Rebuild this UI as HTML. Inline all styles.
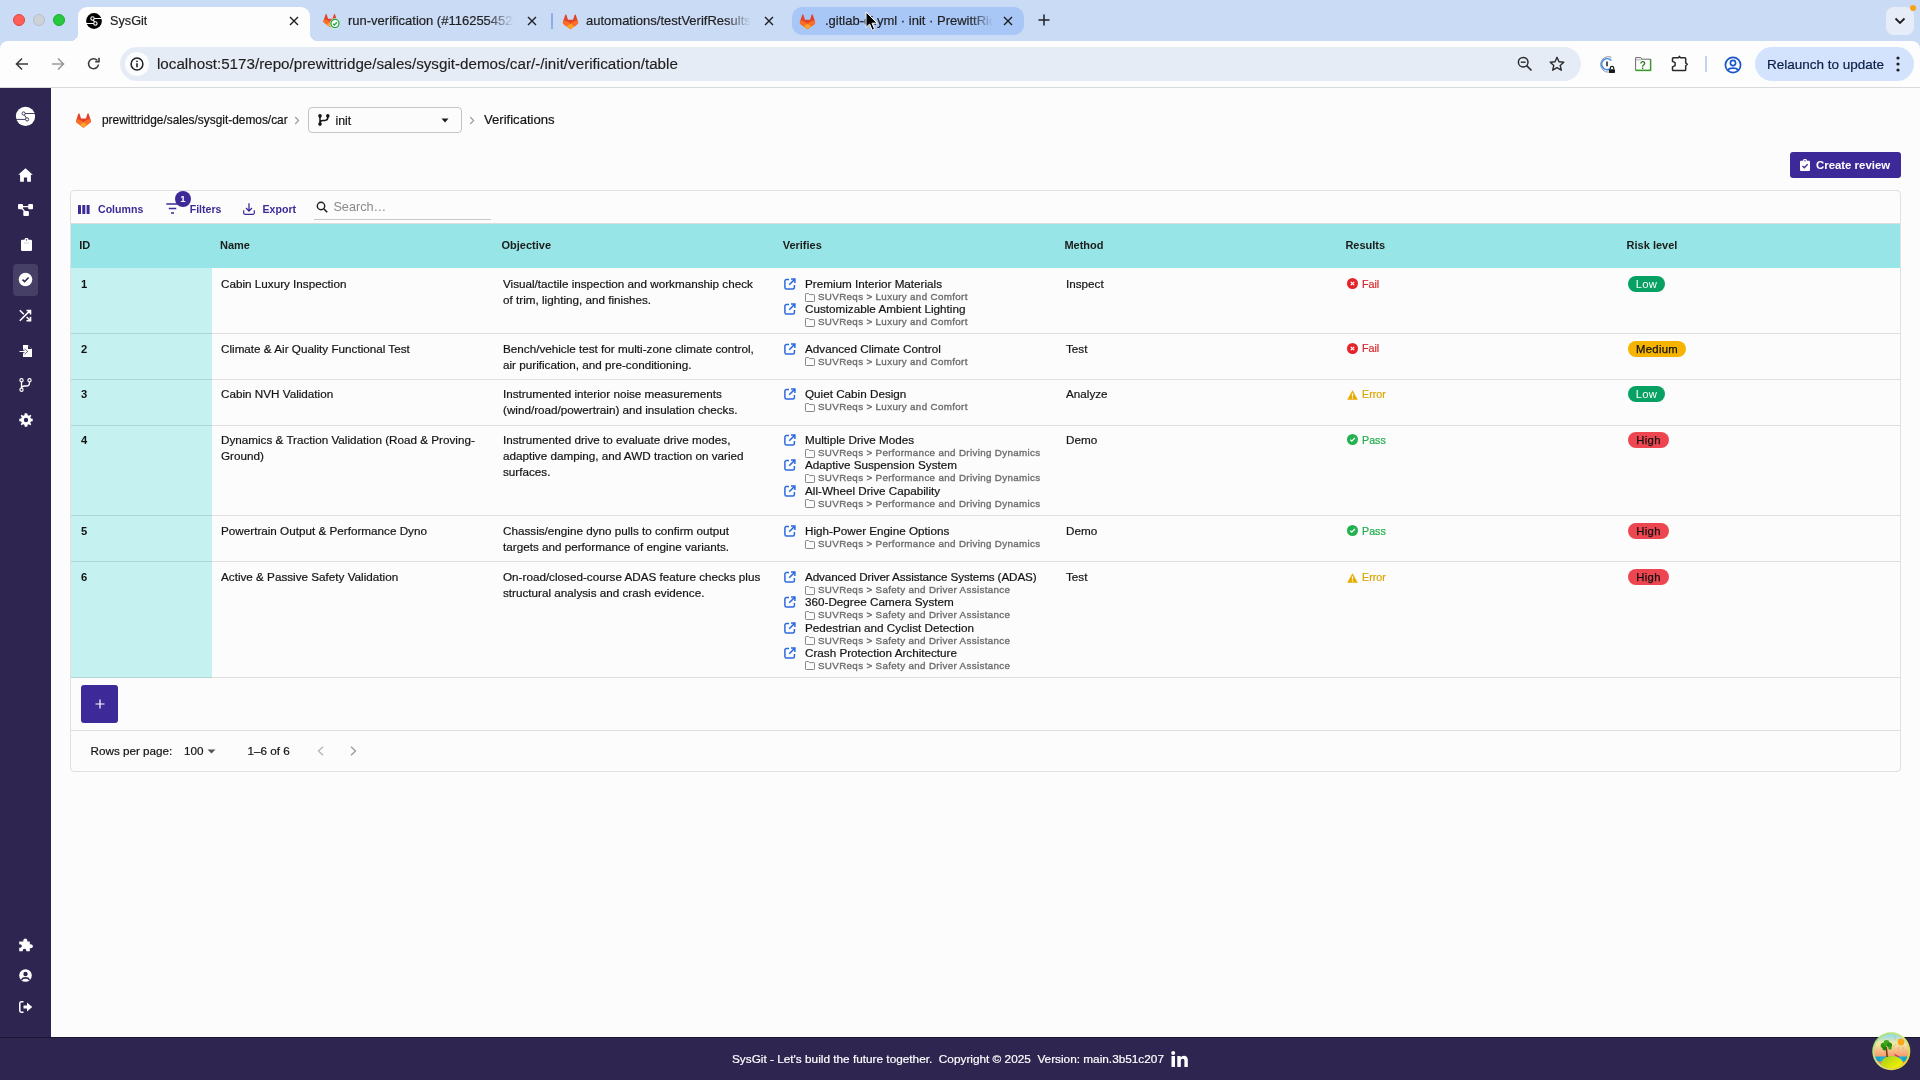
<!DOCTYPE html>
<html><head><meta charset="utf-8">
<style>
*{box-sizing:border-box;margin:0;padding:0}
html,body{width:1920px;height:1080px;overflow:hidden;background:#fcfcfc;-webkit-font-smoothing:antialiased;will-change:transform;font-family:"Liberation Sans",sans-serif;color:#1c1c1c}
.abs{position:absolute}
#tabbar{position:absolute;left:0;top:0;width:1920px;height:52px;background:#cadbf6}
#toolbar{position:absolute;left:0;top:41px;width:1920px;height:46px;background:#fdfdfe;border-radius:8px 8px 0 0}
#sep{position:absolute;left:0;top:87px;width:1920px;height:1px;background:#d9dadc}
.tl{position:absolute;top:14px;width:12px;height:12px;border-radius:50%}
.tab{position:absolute;top:7px;height:34px}
.tabtxt{position:absolute;top:13px;font-size:13px;white-space:nowrap;color:#1f1f1f;overflow:hidden;-webkit-text-stroke:0.2px currentColor}
.tabx{position:absolute;top:14px;width:12px;height:12px}
#side{position:absolute;left:0;top:88px;width:51px;height:949px;background:#2e2650}
#footer{position:absolute;left:0;top:1037px;width:1920px;height:43px;background:#2e2650;border-top:1px solid #1a1530}
.si{position:absolute;left:17px;width:17px;height:17px}

.hd{position:absolute;font-size:11px;font-weight:bold;line-height:16px;color:#1c1c1c;white-space:nowrap}
.idc{position:absolute;font-size:11.2px;font-weight:bold;line-height:16px;color:#111;white-space:nowrap}
.cell{position:absolute;font-size:11.7px;line-height:16px;color:#141414;white-space:nowrap;-webkit-text-stroke:0.2px currentColor}
.sub{position:absolute;font-size:9.8px;line-height:12px;color:#6e6e6e;letter-spacing:0.34px;white-space:nowrap;-webkit-text-stroke:0.35px currentColor}
.chip{position:absolute;height:16px;border-radius:8px;font-size:11.3px;line-height:16px;text-align:center;white-space:nowrap;letter-spacing:0.3px;-webkit-text-stroke:0.25px currentColor}
.tb{position:absolute;font-size:10.6px;font-weight:bold;line-height:16px;color:#3d2a98;white-space:nowrap}
</style></head><body>
<div id="tabbar">
  <div class="tl" style="left:13px;background:#fe5f57;border:0.5px solid #e0443e"></div>
  <div class="tl" style="left:33px;background:#cdd1d8;border:0.5px solid #b9bec6"></div>
  <div class="tl" style="left:53px;background:#28c840;border:0.5px solid #1aab29"></div>
  <!-- active tab -->
  <div class="abs" style="left:78px;top:7px;width:232px;height:34px;background:#fdfdfe;border-radius:9px 9px 0 0"></div>
  <div class="abs" style="left:70px;top:33px;width:8px;height:8px;background:radial-gradient(circle at 0 0,#cadbf6 8px,#fdfdfe 8.5px)"></div>
  <div class="abs" style="left:310px;top:33px;width:8px;height:8px;background:radial-gradient(circle at 100% 0,#cadbf6 8px,#fdfdfe 8.5px)"></div>
  <svg class="abs" style="left:86px;top:13px" width="16" height="16" viewBox="0 0 16 16"><circle cx="8" cy="8" r="7.9" fill="#000"/><path d="M6.5 5.5H16M0 10.5H9.4M6.5 5.5L9.4 10.5" stroke="#fff" stroke-width="1.1"/><circle cx="6.5" cy="5.5" r="1.7" fill="#000" stroke="#fff" stroke-width="1.1"/><circle cx="9.4" cy="10.5" r="1.7" fill="#000" stroke="#fff" stroke-width="1.1"/></svg>
  <div class="tabtxt" style="left:110px;top:13.8px;font-size:12.7px">SysGit</div>
  <svg class="abs tabx" style="left:288px;top:15px" viewBox="0 0 12 12"><path d="M2 2L10 10M10 2L2 10" stroke="#1f1f1f" stroke-width="1.4"/></svg>
  <!-- tab 2 -->
  <svg class="abs" style="left:323px;top:13px" width="19" height="19" viewBox="0 0 19 19"><g transform="translate(-0.3 -0.3) scale(0.95)"><path d="M8 15.2L1.6 10.5C0.9 10 0.6 9.1 0.9 8.3L3 1.8C3.2 1.2 4 1.2 4.2 1.8L5.6 6.3H10.4L11.8 1.8C12 1.2 12.8 1.2 13 1.8L15.1 8.3C15.4 9.1 15.1 10 14.4 10.5Z" fill="#e24329"/><path d="M8 15.2L4.6 12.7 1.6 10.5C0.9 10 0.6 9.1 0.9 8.3L1.4 6.9C3.6 7.3 5.8 8.3 8 10Z" fill="#fc6d26"/><path d="M8 15.2L11.4 12.7 14.4 10.5C15.1 10 15.4 9.1 15.1 8.3L14.6 6.9C12.4 7.3 10.2 8.3 8 10Z" fill="#fc6d26"/><path d="M8 15.2L4.6 12.7C5.6 11.5 6.7 10.6 8 10 9.3 10.6 10.4 11.5 11.4 12.7Z" fill="#fca326"/></g><circle cx="12" cy="10.5" r="5.2" fill="#fff"/><circle cx="12" cy="10.5" r="4.1" fill="#fff" stroke="#22a845" stroke-width="1.4"/><path d="M10 10.7L11.4 12 13.9 9.2" stroke="#22a845" stroke-width="1.3" fill="none"/></svg>
  <div class="tabtxt" style="left:348px;width:166px;-webkit-mask-image:linear-gradient(90deg,#000 138px,transparent 166px)">run-verification (#1162554526</div>
  <svg class="abs tabx" style="left:526px;top:15px" viewBox="0 0 12 12"><path d="M2 2L10 10M10 2L2 10" stroke="#1f1f1f" stroke-width="1.4"/></svg>
  <div class="abs" style="left:551px;top:13px;width:1.5px;height:16px;background:#8fb0e6"></div>
  <!-- tab 3 -->
  <svg class="abs" style="left:562px;top:13px" width="17" height="17" viewBox="0 0 16 16"><path d="M8 15.2L1.6 10.5C0.9 10 0.6 9.1 0.9 8.3L3 1.8C3.2 1.2 4 1.2 4.2 1.8L5.6 6.3H10.4L11.8 1.8C12 1.2 12.8 1.2 13 1.8L15.1 8.3C15.4 9.1 15.1 10 14.4 10.5Z" fill="#e24329"/><path d="M8 15.2L4.6 12.7 1.6 10.5C0.9 10 0.6 9.1 0.9 8.3L1.4 6.9C3.6 7.3 5.8 8.3 8 10Z" fill="#fc6d26"/><path d="M8 15.2L11.4 12.7 14.4 10.5C15.1 10 15.4 9.1 15.1 8.3L14.6 6.9C12.4 7.3 10.2 8.3 8 10Z" fill="#fc6d26"/><path d="M8 15.2L4.6 12.7C5.6 11.5 6.7 10.6 8 10 9.3 10.6 10.4 11.5 11.4 12.7Z" fill="#fca326"/></svg>
  <div class="tabtxt" style="left:586px;width:165px;-webkit-mask-image:linear-gradient(90deg,#000 140px,transparent 165px)">automations/testVerifResults.json</div>
  <svg class="abs tabx" style="left:763px;top:15px" viewBox="0 0 12 12"><path d="M2 2L10 10M10 2L2 10" stroke="#1f1f1f" stroke-width="1.4"/></svg>
  <!-- tab 4 hovered -->
  <div class="abs" style="left:792px;top:7px;width:232px;height:28px;background:#a8c6f6;border-radius:10px"></div>
  <svg class="abs" style="left:799px;top:13px" width="17" height="17" viewBox="0 0 16 16"><path d="M8 15.2L1.6 10.5C0.9 10 0.6 9.1 0.9 8.3L3 1.8C3.2 1.2 4 1.2 4.2 1.8L5.6 6.3H10.4L11.8 1.8C12 1.2 12.8 1.2 13 1.8L15.1 8.3C15.4 9.1 15.1 10 14.4 10.5Z" fill="#e24329"/><path d="M8 15.2L4.6 12.7 1.6 10.5C0.9 10 0.6 9.1 0.9 8.3L1.4 6.9C3.6 7.3 5.8 8.3 8 10Z" fill="#fc6d26"/><path d="M8 15.2L11.4 12.7 14.4 10.5C15.1 10 15.4 9.1 15.1 8.3L14.6 6.9C12.4 7.3 10.2 8.3 8 10Z" fill="#fc6d26"/><path d="M8 15.2L4.6 12.7C5.6 11.5 6.7 10.6 8 10 9.3 10.6 10.4 11.5 11.4 12.7Z" fill="#fca326"/></svg>
  <div class="tabtxt" style="left:825px;width:168px;-webkit-mask-image:linear-gradient(90deg,#000 145px,transparent 168px)">.gitlab-ci.yml · init · PrewittRidge</div>
  <svg class="abs tabx" style="left:1002px;top:15px" viewBox="0 0 12 12"><path d="M2 2L10 10M10 2L2 10" stroke="#1f1f1f" stroke-width="1.4"/></svg>
  <svg class="abs" style="left:1038px;top:14px" width="12" height="12" viewBox="0 0 12 12"><path d="M6 0.5V11.5M0.5 6H11.5" stroke="#1f1f1f" stroke-width="1.5"/></svg>
  <!-- cursor -->
  <svg class="abs" style="left:865px;top:11px" width="14" height="21" viewBox="0 0 14 21"><path d="M1 1V16.5L4.6 13 7.2 19.2 9.6 18.2 7 12.2H12.2Z" fill="#000" stroke="#fff" stroke-width="1"/></svg>
  <!-- dropdown -->
  <div class="abs" style="left:1886px;top:7px;width:28px;height:28px;background:#e6edf9;border-radius:8px"></div>
  <svg class="abs" style="left:1894px;top:16px" width="12" height="10" viewBox="0 0 12 10"><path d="M1.5 2.5L6 7 10.5 2.5" stroke="#1f1f1f" stroke-width="1.8" fill="none"/></svg>
  <div class="abs" style="left:1909.5px;top:4.8px;width:6.5px;height:6.5px;border-radius:50%;background:#f7a21a"></div>
</div>
<div id="toolbar">
  <svg class="abs" style="left:15px;top:16px" width="14" height="14" viewBox="0 0 14 14"><path d="M13 7H1.8M7 1.5L1.5 7 7 12.5" stroke="#3c3c3c" stroke-width="1.6" fill="none"/></svg>
  <svg class="abs" style="left:51px;top:16px" width="14" height="14" viewBox="0 0 14 14"><path d="M1 7H12.2M7 1.5L12.5 7 7 12.5" stroke="#9a9a9a" stroke-width="1.6" fill="none"/></svg>
  <svg class="abs" style="left:87px;top:16px" width="14" height="14" viewBox="0 0 14 14"><path d="M11.5 7.5A5 5 0 1 1 10.2 3.3" stroke="#3c3c3c" stroke-width="1.6" fill="none"/><path d="M12 0.8V4.6H8.2" stroke="#3c3c3c" stroke-width="1.6" fill="none"/></svg>
  <div class="abs" style="left:120px;top:6px;width:1461px;height:34px;background:#e6ecf6;border-radius:17px"></div>
  <div class="abs" style="left:125px;top:11px;width:24px;height:24px;background:#fbfcfe;border-radius:50%"></div>
  <svg class="abs" style="left:130px;top:16px" width="14" height="14" viewBox="0 0 14 14"><circle cx="7" cy="7" r="5.9" stroke="#1f1f1f" stroke-width="1.5" fill="none"/><circle cx="7" cy="4.3" r="0.9" fill="#1f1f1f"/><path d="M7 6.2V10.3" stroke="#1f1f1f" stroke-width="1.6"/></svg>
  <div class="abs" id="url" style="left:157px;top:14px;font-size:15.2px;color:#1f1f1f;white-space:nowrap;-webkit-text-stroke:0.15px currentColor">localhost:5173/repo/prewittridge/sales/sysgit-demos/car/-/init/verification/table</div>
  <svg class="abs" style="left:1517px;top:15px" width="16" height="16" viewBox="0 0 16 16"><circle cx="6.2" cy="6.2" r="4.8" stroke="#2b2b2b" stroke-width="1.5" fill="none"/><path d="M9.6 9.6L14.5 14.5" stroke="#2b2b2b" stroke-width="1.7"/><path d="M3.8 6.2H8.6" stroke="#2b2b2b" stroke-width="1.4"/></svg>
  <svg class="abs" style="left:1549px;top:15px" width="16" height="16" viewBox="0 0 16 16"><path d="M8 1.3L10 5.8 14.8 6.2 11.2 9.4 12.3 14.2 8 11.7 3.7 14.2 4.8 9.4 1.2 6.2 6 5.8Z" stroke="#2b2b2b" stroke-width="1.4" fill="none" stroke-linejoin="round"/></svg>
  <svg class="abs" style="left:1598px;top:13px" width="20" height="20" viewBox="0 0 20 20"><path d="M13.5 3.3A7.8 7.8 0 1 0 11 18.2" stroke="#8a8a8a" stroke-width="0.9" fill="none"/><path d="M13.3 6.5A5.5 5.5 0 1 0 12 15" stroke="#3d8ef0" stroke-width="1.6" fill="none"/><path d="M9 7.5V12.3" stroke="#2a2a2a" stroke-width="1.6"/><rect x="11" y="15.2" width="6" height="3.8" rx="0.8" fill="#1a1a1a"/><path d="M12.3 15.3V14A1.7 1.7 0 0 1 15.7 14V15.3" stroke="#1a1a1a" stroke-width="1.2" fill="none"/></svg>
  <svg class="abs" style="left:1634px;top:15px" width="18" height="16" viewBox="0 0 18 16"><path d="M16.6 3.2V14.4H1.6" stroke="#6fcf5a" stroke-width="1.6" fill="none"/><path d="M1.6 14.4V1.6H6.9L8 3.2H16.6" stroke="#6a6a6a" stroke-width="1" fill="none"/><path d="M16.6 3.2V14.4H1.6" stroke="#35802a" stroke-width="0.9" fill="none"/><path d="M2 3.8H8.3" stroke="#9a9a9a" stroke-width="0.8"/><text x="8.8" y="12.6" font-size="10" font-weight="bold" text-anchor="middle" fill="#2e7a25" font-family="Liberation Sans">?</text></svg>
  <svg class="abs" style="left:1671px;top:13px" width="18" height="18" viewBox="0 0 18 18"><path d="M2.3 3.8H7.4L8.4 2.4 9.4 3.8H13.9A0.8 0.8 0 0 1 14.7 4.6V8.9L16.3 10.3 14.7 11.7V15.8A0.8 0.8 0 0 1 13.9 16.6H2.3A0.8 0.8 0 0 1 1.5 15.8V12.9L4.1 11.6V8.6L1.5 7.4V4.6A0.8 0.8 0 0 1 2.3 3.8Z" stroke="#2a2a2a" stroke-width="1.5" fill="none" stroke-linejoin="round"/></svg>
  <div class="abs" style="left:1705px;top:15px;width:1.5px;height:16px;background:#c4d3ea"></div>
  <svg class="abs" style="left:1724px;top:15px" width="18" height="18" viewBox="0 0 18 18"><circle cx="9" cy="9" r="7.6" stroke="#1a56c8" stroke-width="1.7" fill="none"/><circle cx="9" cy="7" r="2.6" stroke="#1a56c8" stroke-width="1.6" fill="none"/><path d="M4 14C5.5 11.5 12.5 11.5 14 14" stroke="#1a56c8" stroke-width="1.6" fill="none"/></svg>
  <div class="abs" style="left:1755px;top:6px;width:159px;height:34px;background:#d3e3fd;border-radius:17px"></div>
  <div class="abs" style="left:1767px;top:15px;font-size:13.5px;color:#0b1f44;white-space:nowrap;margin-top:0.7px;-webkit-text-stroke:0.2px currentColor">Relaunch to update</div>
  <svg class="abs" style="left:1895px;top:15px" width="6" height="16" viewBox="0 0 6 16"><circle cx="3" cy="2" r="1.6" fill="#1f1f1f"/><circle cx="3" cy="8" r="1.6" fill="#1f1f1f"/><circle cx="3" cy="14" r="1.6" fill="#1f1f1f"/></svg>
</div>
<div id="sep"></div>

<div id="side">
  <svg class="abs" style="left:15px;top:17px" width="22" height="22" viewBox="0 0 22 22"><circle cx="10.5" cy="11.4" r="9.6" fill="#fff"/><path d="M8.6 8.5H20.3M0.8 14.4H12.1M8.6 8.5L12.1 14.4" stroke="#2e2650" stroke-width="0.9"/><circle cx="8.6" cy="8.5" r="1.6" fill="#fff" stroke="#2e2650" stroke-width="0.9"/><circle cx="12.1" cy="14.4" r="1.6" fill="#fff" stroke="#2e2650" stroke-width="0.9"/></svg>
  <svg class="abs" style="left:17.8px;top:79.6px" width="15" height="14" viewBox="0 0 15 14"><path d="M7.5 0.3L0.2 6.8H2.1V13.7H5.9V9.5H9.1V13.7H12.9V6.8H14.8Z" fill="#fff"/></svg>
  <svg class="abs" style="left:17.8px;top:115.6px" width="15" height="12" viewBox="0 0 15 12"><rect x="0" y="0" width="5" height="5.3" rx="1" fill="#fff"/><rect x="10.2" y="0" width="4.9" height="5.3" rx="1" fill="#fff"/><rect x="5.3" y="7" width="5.6" height="5" rx="1" fill="#fff"/><path d="M4 2.6H11M3 3L7.5 8.5" stroke="#fff" stroke-width="1.2"/></svg>
  <svg class="abs" style="left:20.9px;top:150.2px" width="11" height="13" viewBox="0 0 11 13"><path d="M1.2 1.8H3.5A2 2 0 0 1 7.5 1.8H9.8A1.2 1.2 0 0 1 11 3V11.8A1.2 1.2 0 0 1 9.8 13H1.2A1.2 1.2 0 0 1 0 11.8V3A1.2 1.2 0 0 1 1.2 1.8Z" fill="#fff"/><circle cx="5.5" cy="1.9" r="0.7" fill="#2e2650"/><path d="M3 5H8" stroke="#c8c4d8" stroke-width="0.8"/></svg>
  <div class="abs" style="left:13px;top:176px;width:25px;height:32px;background:#463f66;border-radius:4px"></div>
  <svg class="abs" style="left:18px;top:184px" width="15" height="15" viewBox="0 0 15 15"><circle cx="7.5" cy="7.5" r="6.8" fill="#fff"/><path d="M4.5 7.6L6.6 9.6 10.6 5.5" stroke="#2e2650" stroke-width="1.5" fill="none"/></svg>
  <svg class="abs" style="left:19px;top:221px" width="14" height="13" viewBox="0 0 14 13"><path d="M0.8 11.8L11 1.6M7.5 1.5H11.5V5.5M0.8 1.2L4.8 5.2M7.6 8L11.5 11.8M7.5 11.8H11.5V7.8" stroke="#fff" stroke-width="1.6" fill="none"/></svg>
  <svg class="abs" style="left:19px;top:256px" width="14" height="14" viewBox="0 0 14 14"><path d="M4 1H9L13 5V13H4V9.5" fill="#fff"/><path d="M9 1V5H13" fill="#2e2650"/><path d="M0.5 7.5H7M5 5.3L7.4 7.5 5 9.7" stroke="#2e2650" stroke-width="2.2" fill="none"/><path d="M0.5 7.5H7M5 5.3L7.4 7.5 5 9.7" stroke="#fff" stroke-width="1.2" fill="none"/></svg>
  <svg class="abs" style="left:19px;top:290px" width="13" height="14" viewBox="0 0 13 14"><circle cx="2.5" cy="2.3" r="1.6" stroke="#fff" stroke-width="1.2" fill="none"/><circle cx="2.5" cy="11.7" r="1.6" stroke="#fff" stroke-width="1.2" fill="none"/><circle cx="10.5" cy="2.3" r="1.6" stroke="#fff" stroke-width="1.2" fill="none"/><path d="M2.5 4V10M10.5 4V5A3 3 0 0 1 7.5 8H5.5A3 3 0 0 0 2.5 10" stroke="#fff" stroke-width="1.3" fill="none"/></svg>
  <svg class="abs" style="left:19px;top:325px" width="14" height="14" viewBox="0 0 14 14"><path d="M7 0.3L8.3 0.5 8.7 2.3 9.9 2.8 11.4 1.8 12.3 2.7 11.3 4.2 11.8 5.4 13.7 5.7V8.3L11.8 8.6 11.3 9.8 12.3 11.3 11.3 12.3 9.8 11.3 8.6 11.8 8.3 13.7H5.7L5.4 11.8 4.2 11.3 2.7 12.3 1.7 11.3 2.7 9.8 2.2 8.6 0.3 8.3V5.7L2.2 5.4 2.7 4.2 1.7 2.7 2.7 1.7 4.2 2.7 5.4 2.2 5.7 0.3Z" fill="#fff"/><circle cx="7" cy="7" r="2.2" fill="#2e2650"/></svg>
  <svg class="abs" style="left:18.5px;top:850px" width="14" height="14" viewBox="0 0 14 14"><path d="M0.2 3.6H4.6A2 2 0 1 1 8 3.6H10.8V6.6A2 2 0 1 1 10.8 10V13.2H7.2A1.8 1.8 0 1 0 3.8 13.2H0.2V9.6A1.8 1.8 0 1 0 0.2 6.4Z" fill="#fff"/></svg>
  <svg class="abs" style="left:19px;top:881px" width="13" height="13" viewBox="0 0 13 13"><circle cx="6.5" cy="6.5" r="6.3" fill="#fff"/><circle cx="6.5" cy="5" r="2.2" fill="#2e2650"/><path d="M2.6 10.8C3.8 8.2 9.2 8.2 10.4 10.8" stroke="#2e2650" stroke-width="1.6" fill="none"/></svg>
  <svg class="abs" style="left:19px;top:913px" width="14" height="12" viewBox="0 0 14 12"><path d="M4.5 0.8H2.2A1.5 1.5 0 0 0 0.8 2.3V9.7A1.5 1.5 0 0 0 2.2 11.2H4.5" stroke="#fff" stroke-width="1.5" fill="none"/><path d="M4.5 4.5H8V1.5L13.2 6 8 10.5V7.5H4.5Z" fill="#fff"/></svg>
</div>
<div id="footer"></div>
<div class="abs" style="left:732px;top:1052px;font-size:11.8px;color:#fff;white-space:pre;-webkit-text-stroke:0.2px currentColor">SysGit - Let's build the future together.  Copyright © 2025  Version: main.3b51c207</div>
<svg class="abs" style="left:1171px;top:1051px" width="17" height="16" viewBox="0 0 17 16"><rect x="0.5" y="5" width="3.5" height="11" fill="#fff"/><circle cx="2.2" cy="2" r="2" fill="#fff"/><path d="M6.3 5H9.6V6.6C10.2 5.5 11.5 4.7 13 4.7 15.6 4.7 16.8 6.3 16.8 9.2V16H13.4V9.8C13.4 8.5 12.9 7.7 11.8 7.7 10.6 7.7 9.8 8.5 9.8 9.9V16H6.3Z" fill="#fff"/></svg>
<!-- avatar -->
<svg class="abs" style="left:1871px;top:1031px" width="41" height="41" viewBox="0 0 41 41"><defs><linearGradient id="sky" x1="0" y1="0" x2="0" y2="1"><stop offset="0.08" stop-color="#8adcf2"/><stop offset="0.3" stop-color="#f4e8a6"/><stop offset="0.6" stop-color="#f6a070"/><stop offset="0.75" stop-color="#f48060"/></linearGradient><linearGradient id="isl" x1="0" y1="0" x2="1" y2="1"><stop offset="0" stop-color="#9cc820"/><stop offset="0.7" stop-color="#eef000"/></linearGradient><linearGradient id="ring" x1="0" y1="0" x2="1" y2="1"><stop offset="0" stop-color="#90e070"/><stop offset="0.5" stop-color="#d8e880"/><stop offset="1" stop-color="#f0d000"/></linearGradient><clipPath id="cp"><circle cx="20.3" cy="20.2" r="17"/></clipPath></defs>
<circle cx="20.3" cy="20.2" r="19" fill="url(#ring)"/><circle cx="20.3" cy="20.2" r="17.3" fill="#c8d890"/>
<g clip-path="url(#cp)"><rect x="0" y="0" width="41" height="41" fill="url(#sky)"/><circle cx="30" cy="11" r="3.4" fill="#f8a818"/><path d="M24 9V5M25 13L22 16M28 16L27 19M32 16L33 19" stroke="#b89a50" stroke-width="0.6" stroke-dasharray="0.8 0.8"/><rect x="0" y="25.5" width="41" height="5" fill="#18b0d8"/><path d="M3 27H9M3 29H9M32 27H38M32 29H38" stroke="#2080a0" stroke-width="0.6"/><ellipse cx="21" cy="33" rx="11" ry="8" fill="url(#isl)"/><path d="M23.5 23.5L28 26" stroke="#e02060" stroke-width="1.2"/><path d="M16.2 26L15.2 16" stroke="#7a3a10" stroke-width="1.6"/><circle cx="12.5" cy="14.5" r="2.8" fill="#2a9a10"/><circle cx="15.5" cy="12" r="3" fill="#3aaa18"/><circle cx="18.5" cy="14" r="2.6" fill="#2a8a10"/><circle cx="13.5" cy="17.5" r="2" fill="#208010"/><circle cx="19" cy="17" r="1.8" fill="#38a018"/></g></svg>

<!-- breadcrumb -->
<svg class="abs" style="left:75px;top:111.5px" width="17" height="16.5" viewBox="0 0 16 16"><path d="M8 15.2L1.6 10.5C0.9 10 0.6 9.1 0.9 8.3L3 1.8C3.2 1.2 4 1.2 4.2 1.8L5.6 6.3H10.4L11.8 1.8C12 1.2 12.8 1.2 13 1.8L15.1 8.3C15.4 9.1 15.1 10 14.4 10.5Z" fill="#e24329"/><path d="M8 15.2L4.6 12.7 1.6 10.5C0.9 10 0.6 9.1 0.9 8.3L1.4 6.9C3.6 7.3 5.8 8.3 8 10Z" fill="#fc6d26"/><path d="M8 15.2L11.4 12.7 14.4 10.5C15.1 10 15.4 9.1 15.1 8.3L14.6 6.9C12.4 7.3 10.2 8.3 8 10Z" fill="#fc6d26"/><path d="M8 15.2L4.6 12.7C5.6 11.5 6.7 10.6 8 10 9.3 10.6 10.4 11.5 11.4 12.7Z" fill="#fca326"/></svg>
<div class="abs" style="left:102px;top:113px;font-size:11.9px;color:#141414;white-space:nowrap;-webkit-text-stroke:0.2px currentColor">prewittridge/sales/sysgit-demos/car</div>
<svg class="abs" style="left:294px;top:116px" width="6" height="9" viewBox="0 0 6 9"><path d="M1.2 1L4.6 4.5 1.2 8" stroke="#9a9a9a" stroke-width="1.1" fill="none"/></svg>
<div class="abs" style="left:308px;top:107px;width:154px;height:26px;border:1px solid #c4c4c4;border-radius:4px"></div>
<svg class="abs" style="left:318px;top:114px" width="12" height="12" viewBox="0 0 12 12"><circle cx="2" cy="1.9" r="1.8" fill="#141414"/><circle cx="2" cy="10.1" r="1.8" fill="#141414"/><circle cx="9.8" cy="1.9" r="1.8" fill="#141414"/><path d="M2 2V10M9.8 2V3.6A2.8 2.8 0 0 1 7 6.4H4.8A2.8 2.8 0 0 0 2 9.2" stroke="#141414" stroke-width="1.5" fill="none"/></svg>
<div class="abs" style="left:335.5px;top:113.5px;font-size:12.3px;color:#141414;-webkit-text-stroke:0.2px currentColor">init</div>
<svg class="abs" style="left:441px;top:118px" width="8" height="5" viewBox="0 0 8 5"><path d="M0.5 0.5H7.5L4 4.5Z" fill="#1c1c1c"/></svg>
<svg class="abs" style="left:469px;top:116px" width="6" height="9" viewBox="0 0 6 9"><path d="M1.2 1L4.6 4.5 1.2 8" stroke="#9a9a9a" stroke-width="1.1" fill="none"/></svg>
<div class="abs" style="left:484px;top:111.8px;font-size:13.1px;color:#141414;white-space:nowrap;-webkit-text-stroke:0.2px currentColor">Verifications</div>

<!-- create review -->
<div class="abs" style="left:1790px;top:152px;width:111px;height:26px;background:#3d2a98;border-radius:3px"></div>
<svg class="abs" style="left:1800px;top:159px" width="10" height="12" viewBox="0 0 10 12"><path d="M1 1.8H3A2 2 0 0 1 7 1.8H9A1 1 0 0 1 10 2.8V11A1 1 0 0 1 9 12H1A1 1 0 0 1 0 11V2.8A1 1 0 0 1 1 1.8Z" fill="#fff"/><path d="M2.5 7L4.3 8.8 7.6 5.3" stroke="#3d2a98" stroke-width="1.3" fill="none"/><circle cx="5" cy="1.7" r="0.7" fill="#3d2a98"/></svg>
<div class="abs" style="left:1816px;top:159px;font-size:11.4px;font-weight:bold;color:#fff;white-space:nowrap">Create review</div>

<!--TABLE-->
<div class="abs" style="left:70px;top:190px;width:1831px;height:582px;border:1px solid #e0e0e0;border-radius:4px"></div>
<div class="abs" style="left:71px;top:223px;width:1829px;height:45px;background:#97e5e6;border-top:1px solid #d9dddd"></div>
<div class="abs" style="left:71px;top:268px;width:141px;height:410px;background:#c5f1f0"></div>
<div class="hd" style="left:79.3px;top:237px">ID</div>
<div class="hd" style="left:220px;top:237px">Name</div>
<div class="hd" style="left:501.5px;top:237px">Objective</div>
<div class="hd" style="left:782.7px;top:237px">Verifies</div>
<div class="hd" style="left:1064.4px;top:237px">Method</div>
<div class="hd" style="left:1345.4px;top:237px">Results</div>
<div class="hd" style="left:1626.6px;top:237px">Risk level</div>
<div class="abs" style="left:71px;top:333px;width:1829px;height:1px;background:rgba(0,0,0,0.115)"></div>
<div class="idc" style="left:81px;top:276px">1</div>
<div class="cell" style="left:221px;top:276px">Cabin Luxury Inspection</div>
<div class="cell" style="left:503px;top:276px">Visual/tactile inspection and workmanship check<br>of trim, lighting, and finishes.</div>
<svg class="abs" style="left:784px;top:278.0px" width="12" height="12" viewBox="0 0 12 12"><path d="M5 1.6H2.4A1.5 1.5 0 0 0 0.9 3.1V9.6A1.5 1.5 0 0 0 2.4 11.1H8.9A1.5 1.5 0 0 0 10.4 9.6V7" stroke="#2d6ae0" stroke-width="1.5" fill="none"/><path d="M5.2 6.8L10.6 1.4M7 1.1H10.9V5" stroke="#2d6ae0" stroke-width="1.5" fill="none"/></svg>
<div class="cell" style="left:805px;top:276.0px">Premium Interior Materials</div>
<svg class="abs" style="left:805px;top:292.5px" width="10" height="9" viewBox="0 0 10 9"><path d="M0.5 1.2A0.7 0.7 0 0 1 1.2 0.5H3.6L4.6 1.6H8.8A0.7 0.7 0 0 1 9.5 2.3V7.8A0.7 0.7 0 0 1 8.8 8.5H1.2A0.7 0.7 0 0 1 0.5 7.8Z" stroke="#7a7a7a" stroke-width="0.9" fill="none"/></svg>
<div class="sub" style="left:818px;top:290.9px">SUVReqs > Luxury and Comfort</div>
<svg class="abs" style="left:784px;top:303.3px" width="12" height="12" viewBox="0 0 12 12"><path d="M5 1.6H2.4A1.5 1.5 0 0 0 0.9 3.1V9.6A1.5 1.5 0 0 0 2.4 11.1H8.9A1.5 1.5 0 0 0 10.4 9.6V7" stroke="#2d6ae0" stroke-width="1.5" fill="none"/><path d="M5.2 6.8L10.6 1.4M7 1.1H10.9V5" stroke="#2d6ae0" stroke-width="1.5" fill="none"/></svg>
<div class="cell" style="left:805px;top:301.3px">Customizable Ambient Lighting</div>
<svg class="abs" style="left:805px;top:317.8px" width="10" height="9" viewBox="0 0 10 9"><path d="M0.5 1.2A0.7 0.7 0 0 1 1.2 0.5H3.6L4.6 1.6H8.8A0.7 0.7 0 0 1 9.5 2.3V7.8A0.7 0.7 0 0 1 8.8 8.5H1.2A0.7 0.7 0 0 1 0.5 7.8Z" stroke="#7a7a7a" stroke-width="0.9" fill="none"/></svg>
<div class="sub" style="left:818px;top:316.2px">SUVReqs > Luxury and Comfort</div>
<div class="cell" style="left:1066px;top:276px">Inspect</div>
<svg class="abs" style="left:1347px;top:278px" width="11" height="11" viewBox="0 0 11 11"><circle cx="5.5" cy="5.5" r="5.5" fill="#e3242b"/><path d="M3.8 3.8L7.2 7.2M7.2 3.8L3.8 7.2" stroke="#fff" stroke-width="1.2"/></svg>
<div class="cell" style="left:1362px;top:275.5px;color:#d9262c;font-size:10.7px">Fail</div>
<div class="chip" style="left:1628px;top:276px;width:37px;background:#06a163;color:#fff;-webkit-text-stroke:0;letter-spacing:0.2px">Low</div>
<div class="abs" style="left:71px;top:379px;width:1829px;height:1px;background:rgba(0,0,0,0.115)"></div>
<div class="idc" style="left:81px;top:340.6px">2</div>
<div class="cell" style="left:221px;top:340.6px">Climate &amp; Air Quality Functional Test</div>
<div class="cell" style="left:503px;top:340.6px">Bench/vehicle test for multi-zone climate control,<br>air purification, and pre-conditioning.</div>
<svg class="abs" style="left:784px;top:342.6px" width="12" height="12" viewBox="0 0 12 12"><path d="M5 1.6H2.4A1.5 1.5 0 0 0 0.9 3.1V9.6A1.5 1.5 0 0 0 2.4 11.1H8.9A1.5 1.5 0 0 0 10.4 9.6V7" stroke="#2d6ae0" stroke-width="1.5" fill="none"/><path d="M5.2 6.8L10.6 1.4M7 1.1H10.9V5" stroke="#2d6ae0" stroke-width="1.5" fill="none"/></svg>
<div class="cell" style="left:805px;top:340.6px">Advanced Climate Control</div>
<svg class="abs" style="left:805px;top:357.1px" width="10" height="9" viewBox="0 0 10 9"><path d="M0.5 1.2A0.7 0.7 0 0 1 1.2 0.5H3.6L4.6 1.6H8.8A0.7 0.7 0 0 1 9.5 2.3V7.8A0.7 0.7 0 0 1 8.8 8.5H1.2A0.7 0.7 0 0 1 0.5 7.8Z" stroke="#7a7a7a" stroke-width="0.9" fill="none"/></svg>
<div class="sub" style="left:818px;top:355.5px">SUVReqs > Luxury and Comfort</div>
<div class="cell" style="left:1066px;top:340.6px">Test</div>
<svg class="abs" style="left:1347px;top:342.6px" width="11" height="11" viewBox="0 0 11 11"><circle cx="5.5" cy="5.5" r="5.5" fill="#e3242b"/><path d="M3.8 3.8L7.2 7.2M7.2 3.8L3.8 7.2" stroke="#fff" stroke-width="1.2"/></svg>
<div class="cell" style="left:1362px;top:340.1px;color:#d9262c;font-size:10.7px">Fail</div>
<div class="chip" style="left:1628px;top:340.6px;width:58px;background:#f6b400;color:#111">Medium</div>
<div class="abs" style="left:71px;top:425px;width:1829px;height:1px;background:rgba(0,0,0,0.115)"></div>
<div class="idc" style="left:81px;top:386px">3</div>
<div class="cell" style="left:221px;top:386px">Cabin NVH Validation</div>
<div class="cell" style="left:503px;top:386px">Instrumented interior noise measurements<br>(wind/road/powertrain) and insulation checks.</div>
<svg class="abs" style="left:784px;top:388.0px" width="12" height="12" viewBox="0 0 12 12"><path d="M5 1.6H2.4A1.5 1.5 0 0 0 0.9 3.1V9.6A1.5 1.5 0 0 0 2.4 11.1H8.9A1.5 1.5 0 0 0 10.4 9.6V7" stroke="#2d6ae0" stroke-width="1.5" fill="none"/><path d="M5.2 6.8L10.6 1.4M7 1.1H10.9V5" stroke="#2d6ae0" stroke-width="1.5" fill="none"/></svg>
<div class="cell" style="left:805px;top:386.0px">Quiet Cabin Design</div>
<svg class="abs" style="left:805px;top:402.5px" width="10" height="9" viewBox="0 0 10 9"><path d="M0.5 1.2A0.7 0.7 0 0 1 1.2 0.5H3.6L4.6 1.6H8.8A0.7 0.7 0 0 1 9.5 2.3V7.8A0.7 0.7 0 0 1 8.8 8.5H1.2A0.7 0.7 0 0 1 0.5 7.8Z" stroke="#7a7a7a" stroke-width="0.9" fill="none"/></svg>
<div class="sub" style="left:818px;top:400.9px">SUVReqs > Luxury and Comfort</div>
<div class="cell" style="left:1066px;top:386px">Analyze</div>
<svg class="abs" style="left:1347px;top:389.7px" width="11" height="10" viewBox="0 0 11 10"><path d="M5.5 0.3L10.8 9.7H0.2Z" fill="#e8ab00"/><path d="M5.5 3.3V6.5" stroke="#fff" stroke-width="1.2"/><circle cx="5.5" cy="8" r="0.65" fill="#fff"/></svg>
<div class="cell" style="left:1362px;top:385.5px;color:#dba500;font-size:10.7px">Error</div>
<div class="chip" style="left:1628px;top:386px;width:37px;background:#06a163;color:#fff;-webkit-text-stroke:0;letter-spacing:0.2px">Low</div>
<div class="abs" style="left:71px;top:515px;width:1829px;height:1px;background:rgba(0,0,0,0.115)"></div>
<div class="idc" style="left:81px;top:432px">4</div>
<div class="cell" style="left:221px;top:432px">Dynamics &amp; Traction Validation (Road &amp; Proving-<br>Ground)</div>
<div class="cell" style="left:503px;top:432px">Instrumented drive to evaluate drive modes,<br>adaptive damping, and AWD traction on varied<br>surfaces.</div>
<svg class="abs" style="left:784px;top:434.0px" width="12" height="12" viewBox="0 0 12 12"><path d="M5 1.6H2.4A1.5 1.5 0 0 0 0.9 3.1V9.6A1.5 1.5 0 0 0 2.4 11.1H8.9A1.5 1.5 0 0 0 10.4 9.6V7" stroke="#2d6ae0" stroke-width="1.5" fill="none"/><path d="M5.2 6.8L10.6 1.4M7 1.1H10.9V5" stroke="#2d6ae0" stroke-width="1.5" fill="none"/></svg>
<div class="cell" style="left:805px;top:432.0px">Multiple Drive Modes</div>
<svg class="abs" style="left:805px;top:448.5px" width="10" height="9" viewBox="0 0 10 9"><path d="M0.5 1.2A0.7 0.7 0 0 1 1.2 0.5H3.6L4.6 1.6H8.8A0.7 0.7 0 0 1 9.5 2.3V7.8A0.7 0.7 0 0 1 8.8 8.5H1.2A0.7 0.7 0 0 1 0.5 7.8Z" stroke="#7a7a7a" stroke-width="0.9" fill="none"/></svg>
<div class="sub" style="left:818px;top:446.9px">SUVReqs > Performance and Driving Dynamics</div>
<svg class="abs" style="left:784px;top:459.3px" width="12" height="12" viewBox="0 0 12 12"><path d="M5 1.6H2.4A1.5 1.5 0 0 0 0.9 3.1V9.6A1.5 1.5 0 0 0 2.4 11.1H8.9A1.5 1.5 0 0 0 10.4 9.6V7" stroke="#2d6ae0" stroke-width="1.5" fill="none"/><path d="M5.2 6.8L10.6 1.4M7 1.1H10.9V5" stroke="#2d6ae0" stroke-width="1.5" fill="none"/></svg>
<div class="cell" style="left:805px;top:457.3px">Adaptive Suspension System</div>
<svg class="abs" style="left:805px;top:473.8px" width="10" height="9" viewBox="0 0 10 9"><path d="M0.5 1.2A0.7 0.7 0 0 1 1.2 0.5H3.6L4.6 1.6H8.8A0.7 0.7 0 0 1 9.5 2.3V7.8A0.7 0.7 0 0 1 8.8 8.5H1.2A0.7 0.7 0 0 1 0.5 7.8Z" stroke="#7a7a7a" stroke-width="0.9" fill="none"/></svg>
<div class="sub" style="left:818px;top:472.2px">SUVReqs > Performance and Driving Dynamics</div>
<svg class="abs" style="left:784px;top:484.6px" width="12" height="12" viewBox="0 0 12 12"><path d="M5 1.6H2.4A1.5 1.5 0 0 0 0.9 3.1V9.6A1.5 1.5 0 0 0 2.4 11.1H8.9A1.5 1.5 0 0 0 10.4 9.6V7" stroke="#2d6ae0" stroke-width="1.5" fill="none"/><path d="M5.2 6.8L10.6 1.4M7 1.1H10.9V5" stroke="#2d6ae0" stroke-width="1.5" fill="none"/></svg>
<div class="cell" style="left:805px;top:482.6px">All-Wheel Drive Capability</div>
<svg class="abs" style="left:805px;top:499.1px" width="10" height="9" viewBox="0 0 10 9"><path d="M0.5 1.2A0.7 0.7 0 0 1 1.2 0.5H3.6L4.6 1.6H8.8A0.7 0.7 0 0 1 9.5 2.3V7.8A0.7 0.7 0 0 1 8.8 8.5H1.2A0.7 0.7 0 0 1 0.5 7.8Z" stroke="#7a7a7a" stroke-width="0.9" fill="none"/></svg>
<div class="sub" style="left:818px;top:497.5px">SUVReqs > Performance and Driving Dynamics</div>
<div class="cell" style="left:1066px;top:432px">Demo</div>
<svg class="abs" style="left:1347px;top:434px" width="11" height="11" viewBox="0 0 11 11"><circle cx="5.5" cy="5.5" r="5.5" fill="#21b14f"/><path d="M3.2 5.6L4.8 7.1 7.9 4" stroke="#fff" stroke-width="1.3" fill="none"/></svg>
<div class="cell" style="left:1362px;top:431.5px;color:#20ad4b;font-size:10.7px">Pass</div>
<div class="chip" style="left:1628px;top:432px;width:41px;background:#ee4650;color:#111">High</div>
<div class="abs" style="left:71px;top:561px;width:1829px;height:1px;background:rgba(0,0,0,0.115)"></div>
<div class="idc" style="left:81px;top:523px">5</div>
<div class="cell" style="left:221px;top:523px">Powertrain Output &amp; Performance Dyno</div>
<div class="cell" style="left:503px;top:523px">Chassis/engine dyno pulls to confirm output<br>targets and performance of engine variants.</div>
<svg class="abs" style="left:784px;top:525.0px" width="12" height="12" viewBox="0 0 12 12"><path d="M5 1.6H2.4A1.5 1.5 0 0 0 0.9 3.1V9.6A1.5 1.5 0 0 0 2.4 11.1H8.9A1.5 1.5 0 0 0 10.4 9.6V7" stroke="#2d6ae0" stroke-width="1.5" fill="none"/><path d="M5.2 6.8L10.6 1.4M7 1.1H10.9V5" stroke="#2d6ae0" stroke-width="1.5" fill="none"/></svg>
<div class="cell" style="left:805px;top:523.0px">High-Power Engine Options</div>
<svg class="abs" style="left:805px;top:539.5px" width="10" height="9" viewBox="0 0 10 9"><path d="M0.5 1.2A0.7 0.7 0 0 1 1.2 0.5H3.6L4.6 1.6H8.8A0.7 0.7 0 0 1 9.5 2.3V7.8A0.7 0.7 0 0 1 8.8 8.5H1.2A0.7 0.7 0 0 1 0.5 7.8Z" stroke="#7a7a7a" stroke-width="0.9" fill="none"/></svg>
<div class="sub" style="left:818px;top:537.9px">SUVReqs > Performance and Driving Dynamics</div>
<div class="cell" style="left:1066px;top:523px">Demo</div>
<svg class="abs" style="left:1347px;top:525px" width="11" height="11" viewBox="0 0 11 11"><circle cx="5.5" cy="5.5" r="5.5" fill="#21b14f"/><path d="M3.2 5.6L4.8 7.1 7.9 4" stroke="#fff" stroke-width="1.3" fill="none"/></svg>
<div class="cell" style="left:1362px;top:522.5px;color:#20ad4b;font-size:10.7px">Pass</div>
<div class="chip" style="left:1628px;top:523px;width:41px;background:#ee4650;color:#111">High</div>
<div class="idc" style="left:81px;top:569px">6</div>
<div class="cell" style="left:221px;top:569px">Active &amp; Passive Safety Validation</div>
<div class="cell" style="left:503px;top:569px">On-road/closed-course ADAS feature checks plus<br>structural analysis and crash evidence.</div>
<svg class="abs" style="left:784px;top:571.0px" width="12" height="12" viewBox="0 0 12 12"><path d="M5 1.6H2.4A1.5 1.5 0 0 0 0.9 3.1V9.6A1.5 1.5 0 0 0 2.4 11.1H8.9A1.5 1.5 0 0 0 10.4 9.6V7" stroke="#2d6ae0" stroke-width="1.5" fill="none"/><path d="M5.2 6.8L10.6 1.4M7 1.1H10.9V5" stroke="#2d6ae0" stroke-width="1.5" fill="none"/></svg>
<div class="cell" style="left:805px;top:569.0px;letter-spacing:-0.12px">Advanced Driver Assistance Systems (ADAS)</div>
<svg class="abs" style="left:805px;top:585.5px" width="10" height="9" viewBox="0 0 10 9"><path d="M0.5 1.2A0.7 0.7 0 0 1 1.2 0.5H3.6L4.6 1.6H8.8A0.7 0.7 0 0 1 9.5 2.3V7.8A0.7 0.7 0 0 1 8.8 8.5H1.2A0.7 0.7 0 0 1 0.5 7.8Z" stroke="#7a7a7a" stroke-width="0.9" fill="none"/></svg>
<div class="sub" style="left:818px;top:583.9px">SUVReqs > Safety and Driver Assistance</div>
<svg class="abs" style="left:784px;top:596.3px" width="12" height="12" viewBox="0 0 12 12"><path d="M5 1.6H2.4A1.5 1.5 0 0 0 0.9 3.1V9.6A1.5 1.5 0 0 0 2.4 11.1H8.9A1.5 1.5 0 0 0 10.4 9.6V7" stroke="#2d6ae0" stroke-width="1.5" fill="none"/><path d="M5.2 6.8L10.6 1.4M7 1.1H10.9V5" stroke="#2d6ae0" stroke-width="1.5" fill="none"/></svg>
<div class="cell" style="left:805px;top:594.3px">360-Degree Camera System</div>
<svg class="abs" style="left:805px;top:610.8px" width="10" height="9" viewBox="0 0 10 9"><path d="M0.5 1.2A0.7 0.7 0 0 1 1.2 0.5H3.6L4.6 1.6H8.8A0.7 0.7 0 0 1 9.5 2.3V7.8A0.7 0.7 0 0 1 8.8 8.5H1.2A0.7 0.7 0 0 1 0.5 7.8Z" stroke="#7a7a7a" stroke-width="0.9" fill="none"/></svg>
<div class="sub" style="left:818px;top:609.2px">SUVReqs > Safety and Driver Assistance</div>
<svg class="abs" style="left:784px;top:621.6px" width="12" height="12" viewBox="0 0 12 12"><path d="M5 1.6H2.4A1.5 1.5 0 0 0 0.9 3.1V9.6A1.5 1.5 0 0 0 2.4 11.1H8.9A1.5 1.5 0 0 0 10.4 9.6V7" stroke="#2d6ae0" stroke-width="1.5" fill="none"/><path d="M5.2 6.8L10.6 1.4M7 1.1H10.9V5" stroke="#2d6ae0" stroke-width="1.5" fill="none"/></svg>
<div class="cell" style="left:805px;top:619.6px">Pedestrian and Cyclist Detection</div>
<svg class="abs" style="left:805px;top:636.1px" width="10" height="9" viewBox="0 0 10 9"><path d="M0.5 1.2A0.7 0.7 0 0 1 1.2 0.5H3.6L4.6 1.6H8.8A0.7 0.7 0 0 1 9.5 2.3V7.8A0.7 0.7 0 0 1 8.8 8.5H1.2A0.7 0.7 0 0 1 0.5 7.8Z" stroke="#7a7a7a" stroke-width="0.9" fill="none"/></svg>
<div class="sub" style="left:818px;top:634.5px">SUVReqs > Safety and Driver Assistance</div>
<svg class="abs" style="left:784px;top:646.9px" width="12" height="12" viewBox="0 0 12 12"><path d="M5 1.6H2.4A1.5 1.5 0 0 0 0.9 3.1V9.6A1.5 1.5 0 0 0 2.4 11.1H8.9A1.5 1.5 0 0 0 10.4 9.6V7" stroke="#2d6ae0" stroke-width="1.5" fill="none"/><path d="M5.2 6.8L10.6 1.4M7 1.1H10.9V5" stroke="#2d6ae0" stroke-width="1.5" fill="none"/></svg>
<div class="cell" style="left:805px;top:644.9px">Crash Protection Architecture</div>
<svg class="abs" style="left:805px;top:661.4px" width="10" height="9" viewBox="0 0 10 9"><path d="M0.5 1.2A0.7 0.7 0 0 1 1.2 0.5H3.6L4.6 1.6H8.8A0.7 0.7 0 0 1 9.5 2.3V7.8A0.7 0.7 0 0 1 8.8 8.5H1.2A0.7 0.7 0 0 1 0.5 7.8Z" stroke="#7a7a7a" stroke-width="0.9" fill="none"/></svg>
<div class="sub" style="left:818px;top:659.8px">SUVReqs > Safety and Driver Assistance</div>
<div class="cell" style="left:1066px;top:569px">Test</div>
<svg class="abs" style="left:1347px;top:572.7px" width="11" height="10" viewBox="0 0 11 10"><path d="M5.5 0.3L10.8 9.7H0.2Z" fill="#e8ab00"/><path d="M5.5 3.3V6.5" stroke="#fff" stroke-width="1.2"/><circle cx="5.5" cy="8" r="0.65" fill="#fff"/></svg>
<div class="cell" style="left:1362px;top:568.5px;color:#dba500;font-size:10.7px">Error</div>
<div class="chip" style="left:1628px;top:569px;width:41px;background:#ee4650;color:#111">High</div>
<div class="abs" style="left:71px;top:677px;width:1829px;height:1px;background:rgba(0,0,0,0.115)"></div>
<div class="abs" style="left:71px;top:730px;width:1829px;height:1px;background:rgba(0,0,0,0.115)"></div>
<div class="abs" style="left:81px;top:685px;width:37px;height:38px;background:#3d2a98;border-radius:3px"></div>
<svg class="abs" style="left:95px;top:699px" width="10" height="10" viewBox="0 0 10 10"><path d="M5 0.5V9.5M0.5 5H9.5" stroke="#fff" stroke-width="1.2"/></svg>
<div class="cell" style="left:90.5px;top:743px">Rows per page:</div>
<div class="cell" style="left:184px;top:743px">100</div>
<svg class="abs" style="left:207px;top:749px" width="9" height="5" viewBox="0 0 9 5"><path d="M0.5 0.5H8.5L4.5 4.5Z" fill="#555"/></svg>
<div class="cell" style="left:247.5px;top:743px">1–6 of 6</div>
<svg class="abs" style="left:317px;top:746px" width="7" height="10" viewBox="0 0 7 10"><path d="M6 0.8L1.5 5 6 9.2" stroke="#b4b4b4" stroke-width="1.3" fill="none"/></svg>
<svg class="abs" style="left:349.5px;top:746px" width="7" height="10" viewBox="0 0 7 10"><path d="M1 0.8L5.5 5 1 9.2" stroke="#9a9a9a" stroke-width="1.3" fill="none"/></svg>
<svg class="abs" style="left:78px;top:205px" width="12" height="9" viewBox="0 0 12 9"><rect x="0" y="0" width="3" height="9" rx="0.6" fill="#3d2a98"/><rect x="4.3" y="0" width="3" height="9" rx="0.6" fill="#3d2a98"/><rect x="8.6" y="0" width="3" height="9" rx="0.6" fill="#3d2a98"/></svg>
<div class="tb" style="left:98px;top:201px">Columns</div>
<svg class="abs" style="left:166px;top:203px" width="13" height="11" viewBox="0 0 13 11"><path d="M0.3 1H12.7M2.8 5.6H10.2M5 10H8" stroke="#3d2a98" stroke-width="1.5"/></svg>
<div class="abs" style="left:175px;top:191px;width:16px;height:16px;border-radius:50%;background:#3d2a98;color:#fff;font-size:9.5px;font-weight:bold;text-align:center;line-height:16px">1</div>
<div class="tb" style="left:189.7px;top:201px">Filters</div>
<svg class="abs" style="left:243px;top:203px" width="12" height="12" viewBox="0 0 12 12"><path d="M6 0.3V7.8M3 5L6 8 9 5" stroke="#3d2a98" stroke-width="1.3" fill="none"/><path d="M0.7 7.2V10A1.3 1.3 0 0 0 2 11.3H10A1.3 1.3 0 0 0 11.3 10V7.2" stroke="#3d2a98" stroke-width="1.2" fill="none"/></svg>
<div class="tb" style="left:262.5px;top:201px">Export</div>
<svg class="abs" style="left:315.5px;top:201px" width="13" height="13" viewBox="0 0 13 13"><circle cx="5" cy="5" r="3.7" stroke="#1c1c1c" stroke-width="1.4" fill="none"/><path d="M7.8 7.8L11.2 11.2" stroke="#1c1c1c" stroke-width="1.6"/></svg>
<div class="abs" style="left:333.4px;top:200px;font-size:12.7px;color:#8a8a8a;white-space:nowrap">Search…</div>
<div class="abs" style="left:314px;top:219px;width:177px;height:1px;background:#c9c9c9"></div>
<!--/TABLE-->
</body></html>
